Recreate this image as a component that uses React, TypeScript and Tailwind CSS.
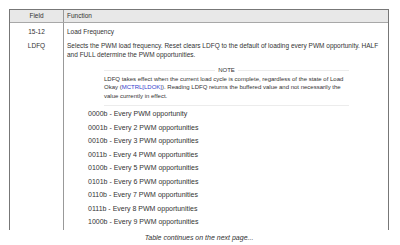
import React from "react";

const loadOptions = [
  "0000b - Every PWM opportunity",
  "0001b - Every 2 PWM opportunities",
  "0010b - Every 3 PWM opportunities",
  "0011b - Every 4 PWM opportunities",
  "0100b - Every 5 PWM opportunities",
  "0101b - Every 6 PWM opportunities",
  "0110b - Every 7 PWM opportunities",
  "0111b - Every 8 PWM opportunities",
  "1000b - Every 9 PWM opportunities",
];

export default function App() {
  return (
    <div className="h-[245px] w-[400px] bg-white pl-[9px] pt-[9px] font-['Liberation_Sans',Arial,sans-serif] text-[6.5px] text-[#333]">
      {/* Register field table, open at the bottom since it continues */}
      <div className="w-[380px] border-x border-t border-[#777]">
        <div className="flex h-[13px] border-b border-[#a8a8a8] bg-[#e8e8e8] leading-[12px]">
          <div className="w-[54px] border-r border-[#999] text-center">Field</div>
          <div className="pl-[3px]">Function</div>
        </div>

        <div className="flex h-[207px]">
          <div className="w-[54px] border-r border-[#999] pt-[4px] text-center leading-[9px]">
            <div>15-12</div>
            <div className="mt-[4.5px]">LDFQ</div>
          </div>

          <div className="flex-1 pl-[3px] pt-[4px] leading-[9px]">
            <div>Load Frequency</div>
            <p className="mt-[4.5px] pr-[2px]">
              Selects the PWM load frequency. Reset clears LDFQ to the default of loading every PWM opportunity. HALF
              and FULL determine the PWM opportunities.
            </p>

            {/* Note box */}
            <div className="ml-[37px] mt-[7px] w-[245px] text-[6px]">
              <div className="flex items-center">
                <div className="h-px flex-1 bg-[#ececec]" />
                <div className="px-[3px] leading-[9px]">NOTE</div>
                <div className="h-px flex-1 bg-[#ececec]" />
              </div>
              <p className="border-b border-[#ececec] pb-[5px] leading-[8.5px]">
                LDFQ takes effect when the current load cycle is complete, regardless of the state of Load Okay (
                <span className="text-[#3340cc]">MCTRL[LDOK]</span>). Reading LDFQ returns the buffered value and not
                necessarily the value currently in effect.
              </p>
            </div>

            <ul className="ml-[21px] mt-px text-[7px]">
              {loadOptions.map((opt) => (
                <li key={opt} className="leading-[13.5px]">
                  {opt}
                </li>
              ))}
            </ul>
          </div>
        </div>
      </div>

      <p className="mt-[3px] w-[380px] text-center text-[7px] italic leading-[10px]">Table continues on the next page...</p>
    </div>
  );
}
